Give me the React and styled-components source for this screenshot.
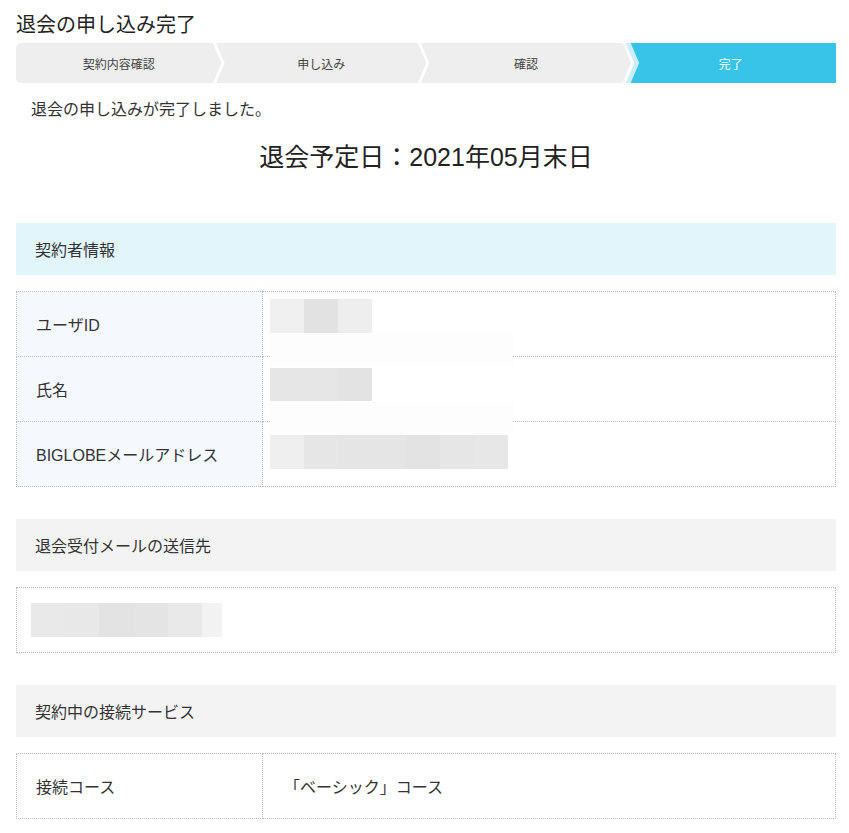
import styled, { createGlobalStyle } from "styled-components";

const GlobalStyle = createGlobalStyle`
  body {
    margin: 0;
    background: #fff;
    font-family: "Liberation Sans", "Noto Sans CJK JP", sans-serif;
    color: #333;
  }
`;

const STEPS = ["契約内容確認", "申し込み", "確認", "完了"];

// ぼかし（モザイク）部分
const REDACT = [
  { top: 8, w: 34, cells: ["#f0f0f0", "#e2e2e2", "#eeeeee"] },
  { top: 42, cover: 243, h: 34 },
  { top: 77, w: 34, cells: ["#e6e6e6", "#e6e6e6", "#e3e3e3"] },
  { top: 110, cover: 243, h: 34 },
  { top: 144, w: 34, cells: ["#efefef", "#e6e6e6", "#e5e5e5", "#e5e5e5", "#e3e3e3", "#e6e6e6", "#e7e7e7"] },
];

const MAIL_CELLS = [
  ["#e9e9e9", 33],
  ["#e8e8e8", 35],
  ["#e3e3e3", 35],
  ["#e4e4e4", 34],
  ["#e9e9e9", 34],
  ["#f2f2f2", 20],
];

const App = () => {
  return (
    <Page>
      <GlobalStyle />
      <Title>退会の申し込み完了</Title>
      <Steps>
        {STEPS.map((s, i) => (
          <Step
            key={s}
            $pos={i === 0 ? "first" : i === STEPS.length - 1 ? "last" : "mid"}
            $active={i === STEPS.length - 1}
          >
            <span>{s}</span>
          </Step>
        ))}
      </Steps>

      <Message>退会の申し込みが完了しました。</Message>
      <DateLine>退会予定日：2021年05月末日</DateLine>

      <SectionHead $tone="blue">契約者情報</SectionHead>
      <TableWrap>
        <InfoTable>
          <tbody>
            <tr>
              <Label $tint>ユーザID</Label>
              <Value />
            </tr>
            <tr>
              <Label $tint>氏名</Label>
              <Value />
            </tr>
            <tr>
              <Label $tint>BIGLOBEメールアドレス</Label>
              <Value />
            </tr>
          </tbody>
        </InfoTable>
        {REDACT.map((r, i) =>
          r.cells ? (
            <Mosaic key={i} $top={r.top}>
              {r.cells.map((c, j) => (
                <Tile key={j} $c={c} $w={r.w} />
              ))}
            </Mosaic>
          ) : (
            <Cover key={i} $top={r.top} $w={r.cover} $h={r.h} />
          )
        )}
      </TableWrap>

      <SectionHead>退会受付メールの送信先</SectionHead>
      <Box>
        <MosaicRow>
          {MAIL_CELLS.map(([c, w], j) => (
            <Tile key={j} $c={c} $w={w} />
          ))}
        </MosaicRow>
      </Box>

      <SectionHead>契約中の接続サービス</SectionHead>
      <InfoTable>
        <tbody>
          <tr>
            <Label>接続コース</Label>
            <Value>「ベーシック」コース</Value>
          </tr>
        </tbody>
      </InfoTable>
    </Page>
  );
};

export default App;

const Page = styled.div`
  width: 820px;
  padding: 13px 0 14px 16px;
`;

const Title = styled.h1`
  margin: 0;
  font-size: 20px;
  font-weight: normal;
  line-height: 24px;
  color: #222;
`;

const Steps = styled.ol`
  display: flex;
  list-style: none;
  margin: 6px 0 0;
  padding: 0;
  height: 40px;
`;

const clips = {
  first:
    "polygon(0 0, calc(100% - 8.5px) 0, 100% 50%, calc(100% - 8.5px) 100%, 0 100%)",
  mid:
    "polygon(0 0, calc(100% - 8.5px) 0, 100% 50%, calc(100% - 8.5px) 100%, 0 100%, 8.5px 50%)",
  last: "polygon(0 0, 100% 0, 100% 100%, 0 100%, 8.5px 50%)",
};

const Step = styled.li`
  position: relative;
  flex: ${(p) => (p.$pos === "first" ? "0 0 205.5px" : "1 1 0")};
  margin-left: ${(p) => (p.$pos === "first" ? "0" : "-5.5px")};
  display: flex;
  align-items: center;
  justify-content: center;
  font-size: 12px;
  color: ${(p) => (p.$active ? "#fff" : "#444")};
  background: ${(p) => (p.$active ? "#cdeef9" : "#eeeeee")};
  clip-path: ${(p) => clips[p.$pos]};
  border-radius: ${(p) =>
    p.$pos === "first" ? "5px 0 0 5px" : p.$pos === "last" ? "0 5px 5px 0" : "0"};

  &::before {
    content: "";
    display: ${(p) => (p.$active ? "block" : "none")};
    position: absolute;
    inset: 0;
    background: #38c4e8;
    clip-path: polygon(5px 0, 100% 0, 100% 100%, 5px 100%, 13.5px 50%);
  }

  & span {
    position: relative;
  }
`;

const Message = styled.p`
  margin: 15px 0 0 15px;
  font-size: 16px;
  line-height: 24px;
`;

const DateLine = styled.p`
  margin: 19px 0 0;
  text-align: center;
  font-size: 25px;
  line-height: 33px;
  color: #222;
`;

const SectionHead = styled.h2`
  margin: 32px 0 0;
  height: 52px;
  padding: 0 19px;
  display: flex;
  align-items: center;
  font-size: 16px;
  font-weight: normal;
  color: #333;
  background: ${(p) => (p.$tone === "blue" ? "#e1f5fb" : "#f3f3f3")};

  &:first-of-type {
    margin-top: 49px;
  }
`;

const TableWrap = styled.div`
  position: relative;
  padding-top: 16px;
`;

const InfoTable = styled.table`
  width: 100%;
  margin-top: 16px;
  border-collapse: collapse;
  font-size: 16px;

  ${TableWrap} > & {
    margin-top: 0;
  }

  & td {
    border: 1px dotted #b9b9b9;
    height: 65px;
    padding: 0 19px;
    box-sizing: border-box;
  }
`;

const Label = styled.td`
  width: 246px;
  background: ${(p) => (p.$tint ? "#f5f9fe" : "#fff")};
  color: #333;
`;

const Value = styled.td`
  color: #333;
  padding-left: 21px !important;
`;

const Mosaic = styled.div`
  position: absolute;
  top: ${(p) => p.$top + 16}px;
  left: 254px;
  display: flex;
  height: 34px;
`;

const Cover = styled.div`
  position: absolute;
  top: ${(p) => p.$top + 16}px;
  left: 254px;
  width: ${(p) => p.$w}px;
  height: ${(p) => p.$h}px;
  background: #fdfdfd;
`;

const Tile = styled.div`
  width: ${(p) => p.$w}px;
  height: 34px;
  background: ${(p) => p.$c};
`;

const Box = styled.div`
  margin-top: 16px;
  border: 1px dotted #b9b9b9;
  padding: 15px 14px;
`;

const MosaicRow = styled.div`
  display: flex;
`;
